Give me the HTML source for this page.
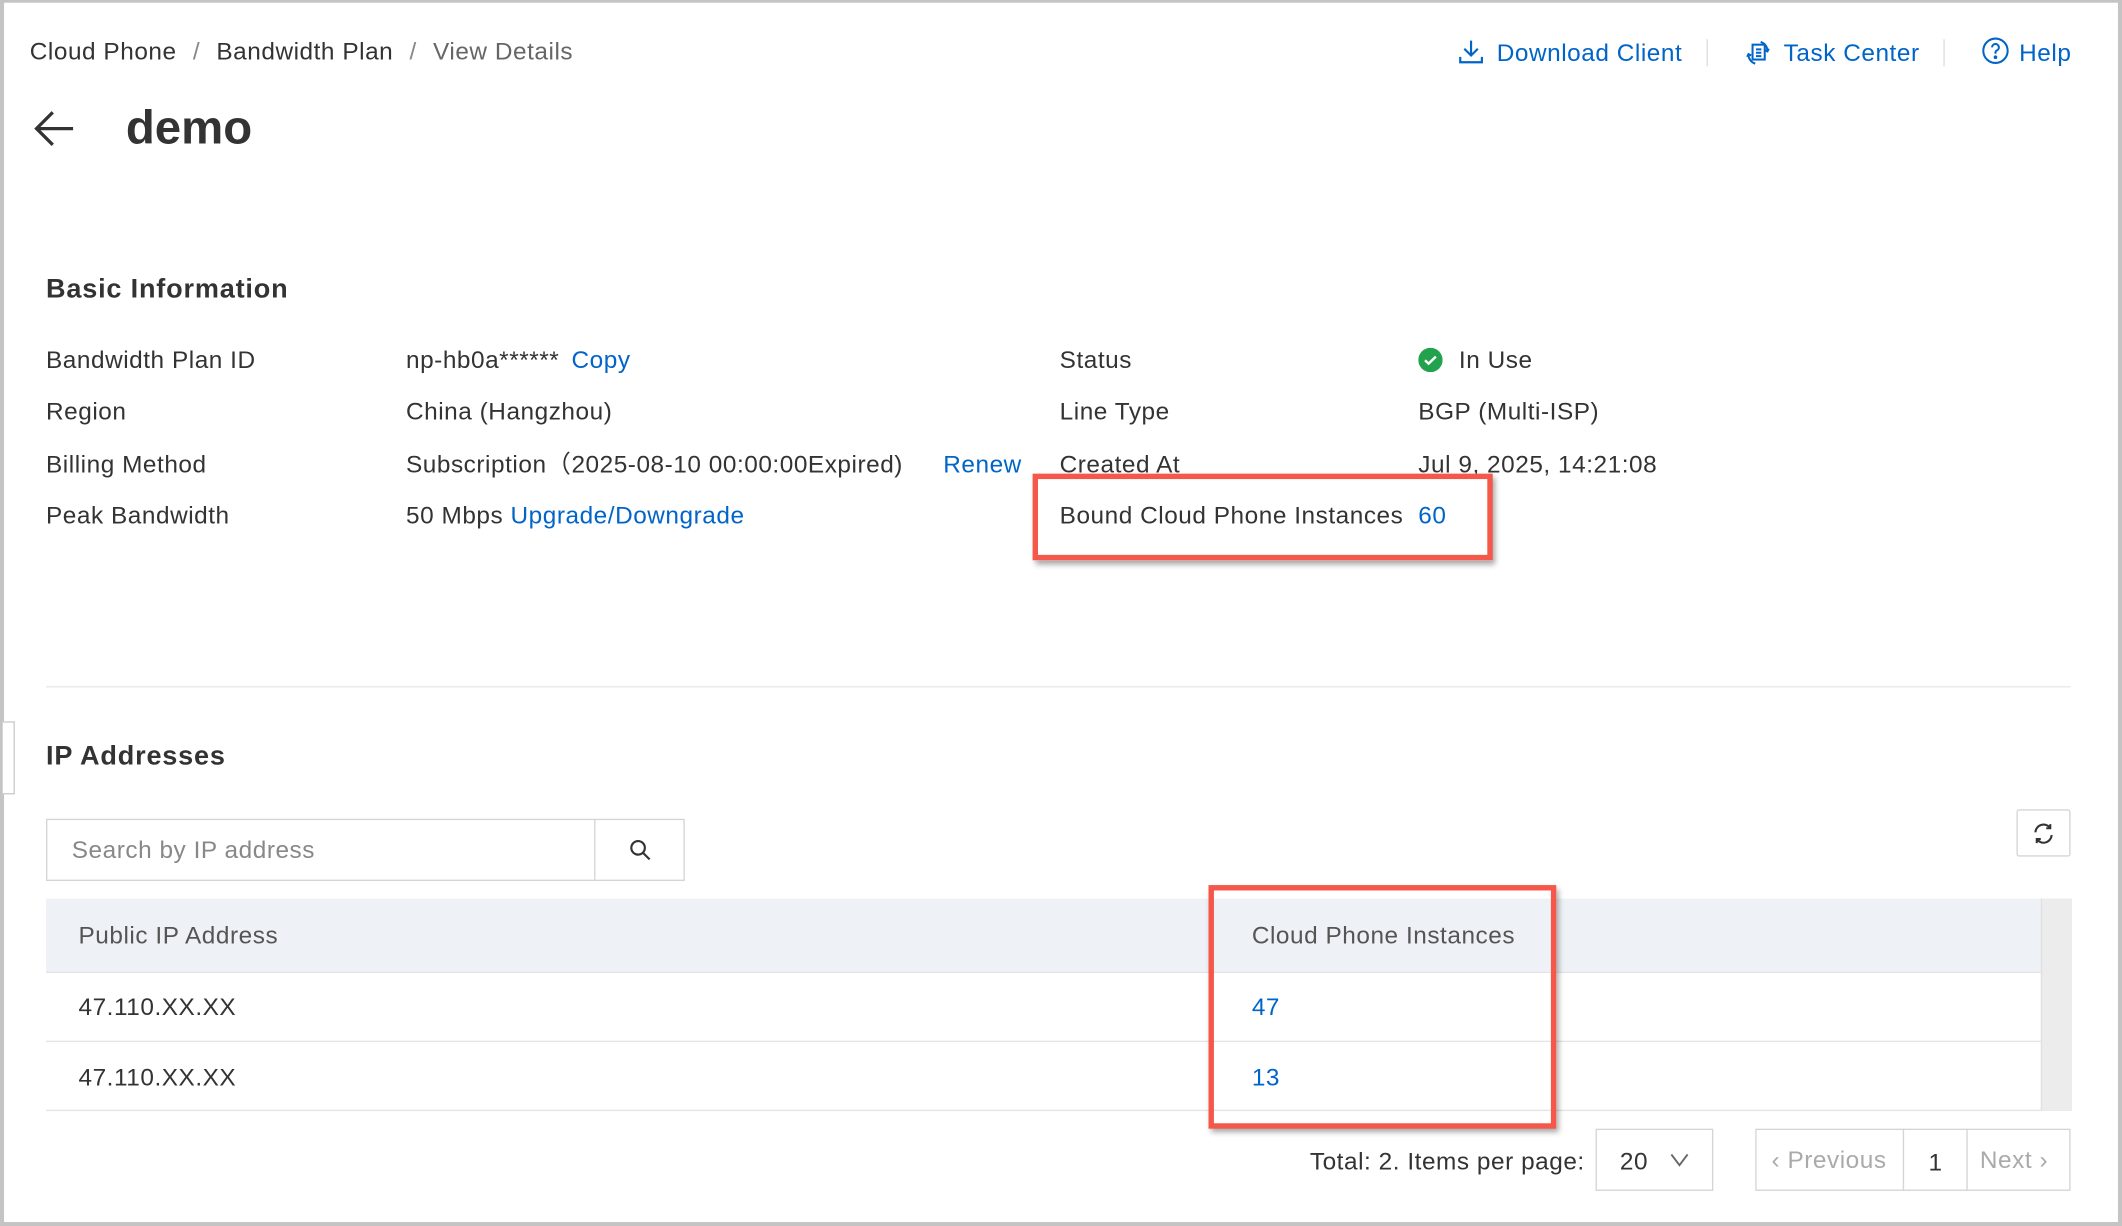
<!DOCTYPE html>
<html><head><meta charset="utf-8"><style>
html,body{margin:0;padding:0;background:#fff;overflow:hidden;width:2122px;height:1226px}
#w{position:absolute;left:0;top:0;width:1568px;height:906px;transform:scale(1.35332);transform-origin:0 0;font-family:"Liberation Sans",Arial,sans-serif;color:#333;background:#fff}
.a{position:absolute;white-space:nowrap}
.t{font-size:18px;line-height:20px;letter-spacing:0.4px}
.b{color:#0064c8}
.box{position:absolute;border:4px solid #f5584a;box-shadow:2px 3px 4px rgba(0,0,0,.35)}
.h{font-size:20px;line-height:24px;font-weight:bold;letter-spacing:0.6px}
</style></head><body><div id="w">
<div class="a" style="left:0;top:0;width:1568px;height:2px;background:#c4c4c4"></div>
<div class="a" style="left:0;top:0;width:3px;height:906px;background:#c4c4c4"></div>
<div class="a" style="left:1565px;top:0;width:3px;height:906px;background:#c4c4c4"></div>
<div class="a" style="left:0;top:903px;width:1568px;height:3px;background:#c4c4c4"></div>
<div class="a" style="left:2px;top:533px;width:8px;height:52px;border:1px solid #ccc;border-left:none;background:#fff"></div>

<div class="a t" style="left:22px;top:28px">Cloud Phone<span style="color:#888;margin:0 12px">/</span>Bandwidth Plan<span style="color:#888;margin:0 12px">/</span><span style="color:#666">View Details</span></div>

<svg class="a" style="left:1077px;top:28px" width="20" height="20" viewBox="0 0 20 20" fill="none" stroke="#0064c8" stroke-width="1.6"><path d="M10 2v11M5 8l5 5 5-5M2 14v4h16v-4"/></svg>
<div class="a t b" style="left:1106px;top:29px">Download Client</div>
<div class="a" style="left:1261px;top:29px;width:1px;height:20px;background:#ddd"></div>
<svg class="a" style="left:1288px;top:28px" width="22" height="22" viewBox="0 0 22 22" fill="none" stroke="#0064c8" stroke-width="1.5"><rect x="7" y="5" width="9" height="11"/><path d="M9.5 8.5h4M9.5 11h4M9.5 13.5h4M4 12a7 7 0 0 0 5 7M18 10a7 7 0 0 0-5-7M3 14l1-2 2 1M19 8l-1 2-2-1"/></svg>
<div class="a t b" style="left:1318px;top:29px">Task Center</div>
<div class="a" style="left:1436px;top:29px;width:1px;height:20px;background:#ddd"></div>
<svg class="a" style="left:1464px;top:27px" width="21" height="21" viewBox="0 0 21 21" fill="none" stroke="#0064c8" stroke-width="1.5"><circle cx="10.5" cy="10.5" r="9"/><path d="M8 8a2.5 2.5 0 1 1 3.5 2.3c-.8.4-1 .9-1 1.7v.7"/><circle cx="10.5" cy="15.3" r=".6" fill="#0064c8"/></svg>
<div class="a t b" style="left:1492px;top:29px">Help</div>

<svg class="a" style="left:24px;top:80px" width="32" height="30" viewBox="0 0 32 30" fill="none" stroke="#333" stroke-width="2.4"><path d="M30 15H3M15 3L3 15l12 12"/></svg>
<div class="a" style="left:93px;top:74px;font-size:35px;line-height:42px;font-weight:bold;color:#333">demo</div>

<div class="a h" style="left:34px;top:202px">Basic Information</div>
<div class="a t" style="left:34px;top:256px">Bandwidth Plan ID</div>
<div class="a t" style="left:34px;top:294px">Region</div>
<div class="a t" style="left:34px;top:333px">Billing Method</div>
<div class="a t" style="left:34px;top:371px">Peak Bandwidth</div>
<div class="a t" style="left:300px;top:256px">np-hb0a******<span class="b" style="margin-left:9px">Copy</span></div>
<div class="a t" style="left:300px;top:294px">China (Hangzhou)</div>
<div class="a t" style="left:300px;top:333px">Subscription（2025-08-10 00:00:00Expired)</div>
<div class="a t b" style="left:697px;top:333px">Renew</div>
<div class="a t" style="left:300px;top:371px">50 Mbps <span class="b">Upgrade/Downgrade</span></div>
<div class="a t" style="left:783px;top:256px">Status</div>
<div class="a t" style="left:783px;top:294px">Line Type</div>
<div class="a t" style="left:783px;top:333px">Created At</div>
<div class="a t" style="left:783px;top:371px">Bound Cloud Phone Instances</div>
<svg class="a" style="left:1048px;top:257px" width="18" height="18" viewBox="0 0 18 18"><circle cx="9" cy="9" r="9" fill="#23a24d"/><path d="M5 9.2l2.6 2.5L13 6.5" fill="none" stroke="#fff" stroke-width="1.8"/></svg>
<div class="a t" style="left:1078px;top:256px">In Use</div>
<div class="a t" style="left:1048px;top:294px">BGP (Multi-ISP)</div>
<div class="a t" style="left:1048px;top:333px">Jul 9, 2025, 14:21:08</div>
<div class="a t b" style="left:1048px;top:371px">60</div>
<div class="box" style="left:763px;top:350px;width:332px;height:56px"></div>

<div class="a" style="left:34px;top:507px;width:1496px;height:1px;background:#e8e8e8"></div>
<div class="a h" style="left:34px;top:547px">IP Addresses</div>

<div class="a" style="left:34px;top:605px;width:472px;height:46px;border:1px solid #d5d5d5;box-sizing:border-box"></div>
<div class="a" style="left:439px;top:605px;width:1px;height:46px;background:#d5d5d5"></div>
<div class="a t" style="left:53px;top:618px;color:#888">Search by IP address</div>
<svg class="a" style="left:464px;top:619px" width="18" height="18" viewBox="0 0 18 18" fill="none" stroke="#333" stroke-width="1.6"><circle cx="7.5" cy="7.5" r="5"/><path d="M11 11l5 5"/></svg>
<div class="a" style="left:1490px;top:598px;width:40px;height:35px;border:1px solid #d5d5d5;box-sizing:border-box;border-radius:2px"></div>
<svg class="a" style="left:1501px;top:607px" width="18" height="18" viewBox="0 0 18 18" fill="none" stroke="#333" stroke-width="1.5"><path d="M3 8a6 6 0 0 1 11-3M15 10a6 6 0 0 1-11 3M14 2v3h-3M4 16v-3h3"/></svg>

<div class="a" style="left:34px;top:664px;width:1496px;height:54px;background:#eef1f5"></div>
<div class="a" style="left:1508px;top:664px;width:22px;height:157px;background:#ececec;border-left:1px solid #e0e0e0"></div>
<div class="a" style="left:34px;top:718px;width:1474px;height:1px;background:#e4e4e4"></div>
<div class="a" style="left:34px;top:769px;width:1474px;height:1px;background:#e4e4e4"></div>
<div class="a" style="left:34px;top:820px;width:1474px;height:1px;background:#e4e4e4"></div>
<div class="a t" style="left:58px;top:681px;color:#555">Public IP Address</div>
<div class="a t" style="left:925px;top:681px;color:#555">Cloud Phone Instances</div>
<div class="a t" style="left:58px;top:734px">47.110.XX.XX</div>
<div class="a t" style="left:58px;top:786px">47.110.XX.XX</div>
<div class="a t b" style="left:925px;top:734px">47</div>
<div class="a t b" style="left:925px;top:786px">13</div>
<div class="box" style="left:893px;top:654px;width:249px;height:172px"></div>

<div class="a t" style="right:397px;top:848px">Total: 2. Items per page:</div>
<div class="a" style="left:1179px;top:834px;width:87px;height:46px;border:1px solid #d5d5d5;box-sizing:border-box"></div>
<div class="a t" style="left:1197px;top:848px">20</div>
<svg class="a" style="left:1233px;top:851px" width="16" height="12" viewBox="0 0 16 12" fill="none" stroke="#666" stroke-width="1.4"><path d="M2 2l6 8 6-8"/></svg>
<div class="a" style="left:1297px;top:834px;width:233px;height:46px;border:1px solid #d5d5d5;box-sizing:border-box"></div>
<div class="a" style="left:1406px;top:834px;width:1px;height:46px;background:#d5d5d5"></div>
<div class="a" style="left:1453px;top:834px;width:1px;height:46px;background:#d5d5d5"></div>
<div class="a t" style="left:1309px;top:847px;color:#aaa">&lsaquo; Previous</div>
<div class="a t" style="left:1425px;top:849px">1</div>
<div class="a t" style="left:1463px;top:847px;color:#aaa">Next &rsaquo;</div>
</div></body></html>
